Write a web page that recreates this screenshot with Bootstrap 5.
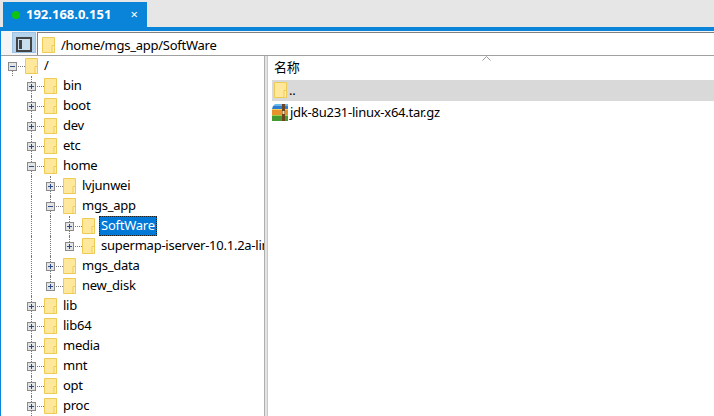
<!DOCTYPE html>
<html lang="zh">
<head>
<meta charset="utf-8">
<title>SFTP</title>
<link href="https://cdn.jsdelivr.net/npm/bootstrap@5.3.0/dist/css/bootstrap.min.css" rel="stylesheet">
<style>
html,body{height:416px;overflow:hidden;margin:0;background:#fff}
body{font:13px/20px "Noto Sans","Noto Sans CJK SC",sans-serif;color:#000;letter-spacing:-.25px}
.app-win{height:416px;width:714px;overflow:hidden}
.tab-strip{height:27px;background:#e6e6e6;padding:2px 0 0 3px}
.tab-item{width:144px;height:25px;background:#0a84d8;color:#fff;font-weight:700;font-size:13px;line-height:25px;padding-left:9px;letter-spacing:0}
.tab-dot{width:8px;height:8px;border-radius:50%;background:#0fc40f;margin-right:6px}
.tab-x{margin-left:auto;margin-right:9px;font-size:13px;font-weight:400}
.body-wrap{flex:1;min-height:0;border-top:4px solid #0a84d8;border-left:1px solid #0a84d8}
.path-bar{height:25px;background:#f5f5f5;padding:1px 0 0 11px;border-bottom:1px solid #a0a0a0}
.panel-btn{width:24px;height:21px;background:#b5d3ec;border:1px solid #9cc3e4}
.path-field{flex:1;background:#fff;border-top:1px solid #808080;border-left:1px solid #808080;margin-left:1px;height:23px;padding-left:4px;gap:6px;line-height:24px}
.path-ico{margin-top:4px}
.tree-pane{width:263px;overflow:hidden;position:relative}
.split-bar{width:4px;background:#e3e3e3;border-left:1px solid #b0b0b0;border-right:1px solid #c8c8c8}
.list-pane{flex:1;min-width:0;padding:0 0 0 4px;position:relative}
.tree-row{height:20px;white-space:nowrap}
.guide,.twist{height:20px;flex:none;position:relative}
.guide{width:19px}
.twist{width:24px}
.guide.on::before,.twist.up::before,.twist.down::after{content:"";position:absolute;left:11px;border-left:1px dotted #777}
.guide.on::before{top:0;bottom:0}
.twist.up::before{top:0;height:6px}
.twist.down::after{top:15px;height:5px}
.twist svg{position:absolute;left:7px;top:6px}
.stub{width:7px;border-top:1px dotted #777;position:absolute;left:17px;top:10px}
.ico{flex:none;display:block}
.tree-ico{margin-top:2px}
.node-label{margin-left:4px;padding:0 2px;line-height:18px;height:20px}
.node-label.sel{background:#0078d7;color:#fff;outline:1px dotted #222;outline-offset:-1px}
.col-head{height:24px;line-height:22px;padding-left:2px;position:relative}
.sort-up{position:absolute;left:210px;top:0}
.file-row{height:21px;line-height:20px}
.file-row.par{background:#d9d9d9;margin-bottom:1px;padding-left:2px}
.file-row.arch{gap:2px}
.row-ico{margin-top:2px}
.dots-label{margin-left:2px}
</style>
</head>
<body>
<svg width="0" height="0" class="d-block position-absolute">
<defs>
<symbol id="fld" viewBox="0 0 13 16"><path d="M.5.5h12v15H.5z" fill="#ffe89c" stroke="#eecb55"/><path d="M10 15.5v-7h2.5v7z" fill="#ffeeb4" stroke="#eecb55"/></symbol>
<symbol id="plus" viewBox="0 0 9 9"><rect x=".5" y=".5" width="8" height="8" fill="#e4e4e4" stroke="#8a8a8a"/><path d="M2 4.5h5M4.5 2v5" stroke="#2a4a8c"/></symbol>
<symbol id="minus" viewBox="0 0 9 9"><rect x=".5" y=".5" width="8" height="8" fill="#e4e4e4" stroke="#8a8a8a"/><path d="M2 4.5h5" stroke="#2a4a8c"/></symbol>
</defs>
</svg>
<div class="app-win d-flex flex-column">
  <div class="tab-strip">
    <div class="tab-item d-flex align-items-center"><span class="tab-dot"></span>192.168.0.151<span class="tab-x">×</span></div>
  </div>
  <div class="body-wrap d-flex flex-column">
    <div class="path-bar d-flex">
      <div class="panel-btn d-flex align-items-end justify-content-center">
        <svg width="16" height="15" viewBox="0 0 16 15"><rect x="1" y="1" width="14" height="13" fill="#c8dff0" stroke="#444" stroke-width="2"/><rect x="3" y="3" width="3" height="9" fill="#444"/></svg>
      </div>
      <div class="path-field d-flex align-items-start"><svg class="ico path-ico" width="13" height="16"><use href="#fld"/></svg>/home/mgs_app/SoftWare</div>
    </div>
    <div class="d-flex flex-grow-1" style="min-height:0">
      <div class="tree-pane" id="tree"></div>
      <div class="split-bar"></div>
      <div class="list-pane">
        <div class="col-head">名称<svg class="sort-up" width="9" height="5" viewBox="0 0 9 5"><path d="M.5 4.5l4-4 4 4" fill="none" stroke="#9a9a9a"/></svg></div>
        <div class="file-row par d-flex"><svg class="ico row-ico" width="13" height="16"><use href="#fld"/></svg><span class="dots-label">..</span></div>
        <div class="file-row arch d-flex">
          <svg class="ico row-ico" width="16" height="17" viewBox="0 0 16 17"><path d="M3 0h13v2H1z" fill="#6db8ec"/><path d="M1 2h15v3H0z" fill="#2f7fd0"/><rect width="16" height="1" y="5" fill="#f6d060"/><rect width="16" height="5" y="6" fill="#e8932a"/><rect width="16" height="1" y="11" fill="#9ad04a"/><rect width="16" height="5" y="12" fill="#469a30"/><rect x="10" y="0" width="3" height="17" fill="#6e4320"/><rect x="10.5" y="7" width="2" height="3" fill="#f4e2a0"/></svg>
          <span>jdk-8u231-linux-x64.tar.gz</span>
        </div>
      </div>
    </div>
  </div>
</div>
<script>
// [label, depth, expanded, has-up, has-down, column guides]
var rows=[["/",0,1,0,1,""],["bin",1,0,1,1,"-"],["boot",1,0,1,1,"-"],["dev",1,0,1,1,"-"],["etc",1,0,1,1,"-"],["home",1,1,1,1,"-"],
["lvjunwei",2,0,1,1,"-g"],["mgs_app",2,1,1,1,"-g"],["SoftWare",3,0,1,1,"-gg"],["supermap-iserver-10.1.2a-linux-x64",3,0,1,0,"-gg"],
["mgs_data",2,0,1,1,"-g"],["new_disk",2,0,1,0,"-g"],["lib",1,0,1,1,"-"],["lib64",1,0,1,1,"-"],["media",1,0,1,1,"-"],["mnt",1,0,1,1,"-"],["opt",1,0,1,1,"-"],["proc",1,0,1,1,"-"]];
var h='';
rows.forEach(function(r){
  var s='<div class="tree-row d-flex">';
  for(var k=0;k<r[1];k++){s+='<span class="guide'+(r[5][k]==='g'?' on':'')+'"></span>';}
  s+='<span class="twist'+(r[3]?' up':'')+(r[4]?' down':'')+'"><svg width="9" height="9"><use href="#'+(r[2]?'minus':'plus')+'"/></svg><i class="stub"></i></span>';
  s+='<svg class="ico tree-ico" width="13" height="16"><use href="#fld"/></svg>';
  s+='<span class="node-label'+(r[0]==='SoftWare'?' sel':'')+'">'+r[0]+'</span></div>';
  h+=s;
});
document.getElementById('tree').innerHTML=h;
</script>
</body>
</html>
